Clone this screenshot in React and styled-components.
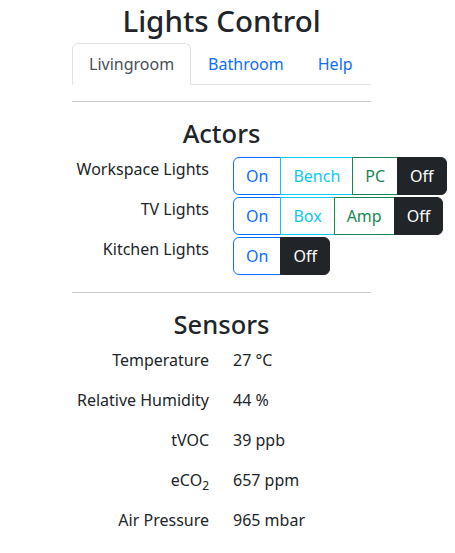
import React from 'react'
import styled, { createGlobalStyle } from 'styled-components'

const GlobalStyle = createGlobalStyle`
  body {
    margin: 0;
    font-family: "Noto Sans", "DejaVu Sans", sans-serif;
    font-size: 16px;
    line-height: 1.5;
    color: #212529;
    background: #fff;
  }
  * { box-sizing: border-box; }
`

const colors = {
  primary: '#0d6efd',
  info: '#0dcaf0',
  success: '#198754',
  dark: '#212529',
}

const Container = styled.div`
  width: 299px;
  margin: 0 0 0 72px;
`

const Title = styled.h1`
  margin: 0 0 5px 0;
  padding-top: 3px;
  font-size: 29.5px;
  font-weight: 500;
  line-height: 1.2;
  text-align: center;
`

const Tabs = styled.ul`
  display: flex;
  list-style: none;
  margin: 0;
  padding: 0;
  border-bottom: 1px solid #dee2e6;
`

const Tab = styled.li`
  margin-bottom: -1px;
  padding: 8px 16px;
  border: 1px solid ${(p) => (p.active ? '#dee2e6' : 'transparent')};
  border-bottom-color: ${(p) => (p.active ? '#fff' : 'transparent')};
  border-radius: 6px 6px 0 0;
  color: ${(p) => (p.active ? '#495057' : colors.primary)};
  background: ${(p) => (p.active ? '#fff' : 'transparent')};
`

const Rule = styled.hr`
  margin: ${(p) => p.top || 16}px 0 16px;
  border: 0;
  border-top: 1px solid #c8c9ca;
`

const Heading = styled.h2`
  margin: 0 0 8px 0;
  font-size: 25.5px;
  font-weight: 500;
  line-height: 1.2;
  text-align: center;
`

const Row = styled.div`
  display: flex;
  gap: 24px;
  margin-bottom: ${(p) => p.gap || 2}px;
`

const Label = styled.div`
  width: 137px;
  flex: none;
  text-align: right;
  white-space: nowrap;
`

const Value = styled.div`
  white-space: nowrap;
`

const Group = styled.div`
  display: flex;
  flex: none;
`

const Button = styled.button`
  font: inherit;
  line-height: 1.5;
  padding: 6px 12px;
  border: 1px solid ${(p) => colors[p.variant]};
  color: ${(p) => (p.variant === 'dark' ? '#fff' : colors[p.variant])};
  background: ${(p) => (p.variant === 'dark' ? colors.dark : '#fff')};
  border-radius: 0;
  margin-left: -1px;
  white-space: nowrap;
  &:first-child {
    margin-left: 0;
    border-top-left-radius: 6px;
    border-bottom-left-radius: 6px;
  }
  &:last-child {
    border-top-right-radius: 6px;
    border-bottom-right-radius: 6px;
  }
`

const Sub = styled.sub`
  font-size: 0.75em;
  line-height: 0;
`

const actors = [
  { name: 'Workspace Lights', modes: [['On', 'primary'], ['Bench', 'info'], ['PC', 'success'], ['Off', 'dark']] },
  { name: 'TV Lights', modes: [['On', 'primary'], ['Box', 'info'], ['Amp', 'success'], ['Off', 'dark']] },
  { name: 'Kitchen Lights', modes: [['On', 'primary'], ['Off', 'dark']] },
]

const sensors = [
  ['Temperature', '27 °C'],
  ['Relative Humidity', '44 %'],
  ['tVOC', '39 ppb'],
  [<>eCO<Sub>2</Sub></>, '657 ppm'],
  ['Air Pressure', '965 mbar'],
]

export default function App() {
  return (
    <>
      <GlobalStyle />
      <Container>
        <Title>Lights Control</Title>
        <Tabs>
          <Tab active>Livingroom</Tab>
          <Tab>Bathroom</Tab>
          <Tab>Help</Tab>
        </Tabs>
        <Rule />
        <Heading>Actors</Heading>
        {actors.map((a) => (
          <Row key={a.name}>
            <Label>{a.name}</Label>
            <Group>
              {a.modes.map(([text, variant]) => (
                <Button key={text} variant={variant}>{text}</Button>
              ))}
            </Group>
          </Row>
        ))}
        <Rule top={17} />
        <Heading>Sensors</Heading>
        {sensors.map(([label, value], i) => (
          <Row key={i} gap={16}>
            <Label>{label}</Label>
            <Value>{value}</Value>
          </Row>
        ))}
      </Container>
    </>
  )
}
